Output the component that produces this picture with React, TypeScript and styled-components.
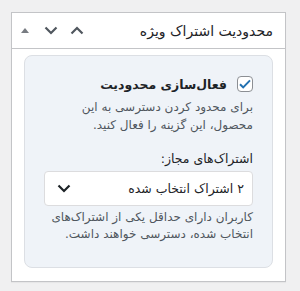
import styled, { createGlobalStyle } from "styled-components";

const GlobalStyle = createGlobalStyle`
  html, body {
    margin: 0;
    padding: 0;
    background: #f0f0f1;
  }
  body {
    font-family: "DejaVu Sans", "Noto Sans", sans-serif;
    color: #1d2327;
  }
`;

const Page = styled.div`
  padding: 12px 14px 8px 11px;
`;

const Postbox = styled.div`
  direction: rtl;
  background: #fff;
  border: 1px solid #c3c4c7;
  box-shadow: 0 1px 1px rgba(0, 0, 0, 0.04);
`;

const Header = styled.div`
  display: flex;
  align-items: center;
  justify-content: space-between;
  height: 35px;
  padding-right: 12px;
  border-bottom: 1px solid #c3c4c7;
`;

const Title = styled.h2`
  margin: 0;
  font-size: 14px;
  font-weight: 400;
  color: #1d2327;
`;

const Actions = styled.div`
  display: flex;
  height: 100%;
`;

const HandleButton = styled.button<{ $muted?: boolean }>`
  width: 26px;
  height: 100%;
  padding: 0;
  border: 0;
  background: none;
  display: flex;
  align-items: center;
  justify-content: center;
  color: ${({ $muted }) => ($muted ? "#787c82" : "#50575e")};
`;

const Inside = styled.div`
  padding: 6px 12px 13px;
`;

const Card = styled.div`
  background: #eff3f8;
  border: 1px solid #dcdfe4;
  border-radius: 8px;
  padding: 20px 19px 24px;
`;

const CheckRow = styled.label`
  display: flex;
  align-items: center;
  gap: 10px;
`;

const Checkbox = styled.span`
  width: 14px;
  height: 14px;
  border: 1px solid #8c8f94;
  border-radius: 4px;
  background: #fff;
  display: flex;
  align-items: center;
  justify-content: center;
  flex-shrink: 0;
`;

const CheckLabel = styled.span`
  font-size: 12.5px;
  font-weight: 700;
  color: #1d2327;
`;

const Description = styled.p`
  margin: 6px 0 0;
  font-size: 12px;
  line-height: 18px;
  color: #50575e;
`;

const FieldLabel = styled.div`
  margin-top: 16px;
  font-size: 12.5px;
  line-height: 18px;
  color: #1d2327;
`;

const Select = styled.div`
  margin-top: 3px;
  height: 33px;
  background: #fff;
  border: 1px solid #dcdcde;
  border-radius: 4px;
  display: flex;
  align-items: center;
  justify-content: space-between;
  padding: 0 8px 0 12px;
  font-size: 12.5px;
  color: #1d2327;
`;

const Help = styled.p`
  margin: 3px 0 0;
  font-size: 12px;
  line-height: 17px;
  color: #50575e;
`;

const Chevron = ({ up }: { up?: boolean }) => (
  <svg width="14" height="9" viewBox="0 0 14 9" fill="none">
    <path
      d={up ? "M1.5 7.5 7 2l5.5 5.5" : "M1.5 1.5 7 7l5.5-5.5"}
      stroke="currentColor"
      strokeWidth="2.2"
    />
  </svg>
);

const App = () => (
  <>
    <GlobalStyle />
    <Page>
      <Postbox>
        <Header>
          <Title>محدودیت اشتراک ویژه</Title>
          <Actions>
            <HandleButton>
              <Chevron up />
            </HandleButton>
            <HandleButton>
              <Chevron />
            </HandleButton>
            <HandleButton $muted>
              <svg width="8" height="5" viewBox="0 0 8 5">
                <path d="M0 5 4 0l4 5z" fill="currentColor" />
              </svg>
            </HandleButton>
          </Actions>
        </Header>
        <Inside>
          <Card>
            <CheckRow>
              <Checkbox>
                <svg width="12" height="10" viewBox="0 0 12 10" fill="none">
                  <path d="M1 5.2 4.2 8.4 11 1.4" stroke="#2271b1" strokeWidth="2" />
                </svg>
              </Checkbox>
              <CheckLabel>فعال‌سازی محدودیت</CheckLabel>
            </CheckRow>
            <Description>
              برای محدود کردن دسترسی به این محصول، این گزینه را فعال کنید.
            </Description>
            <FieldLabel>اشتراک‌های مجاز:</FieldLabel>
            <Select>
              <span>۲ اشتراک انتخاب شده</span>
              <Chevron />
            </Select>
            <Help>
              کاربران دارای حداقل یکی از اشتراک‌های انتخاب شده، دسترسی خواهند داشت.
            </Help>
          </Card>
        </Inside>
      </Postbox>
    </Page>
  </>
);

export default App;
